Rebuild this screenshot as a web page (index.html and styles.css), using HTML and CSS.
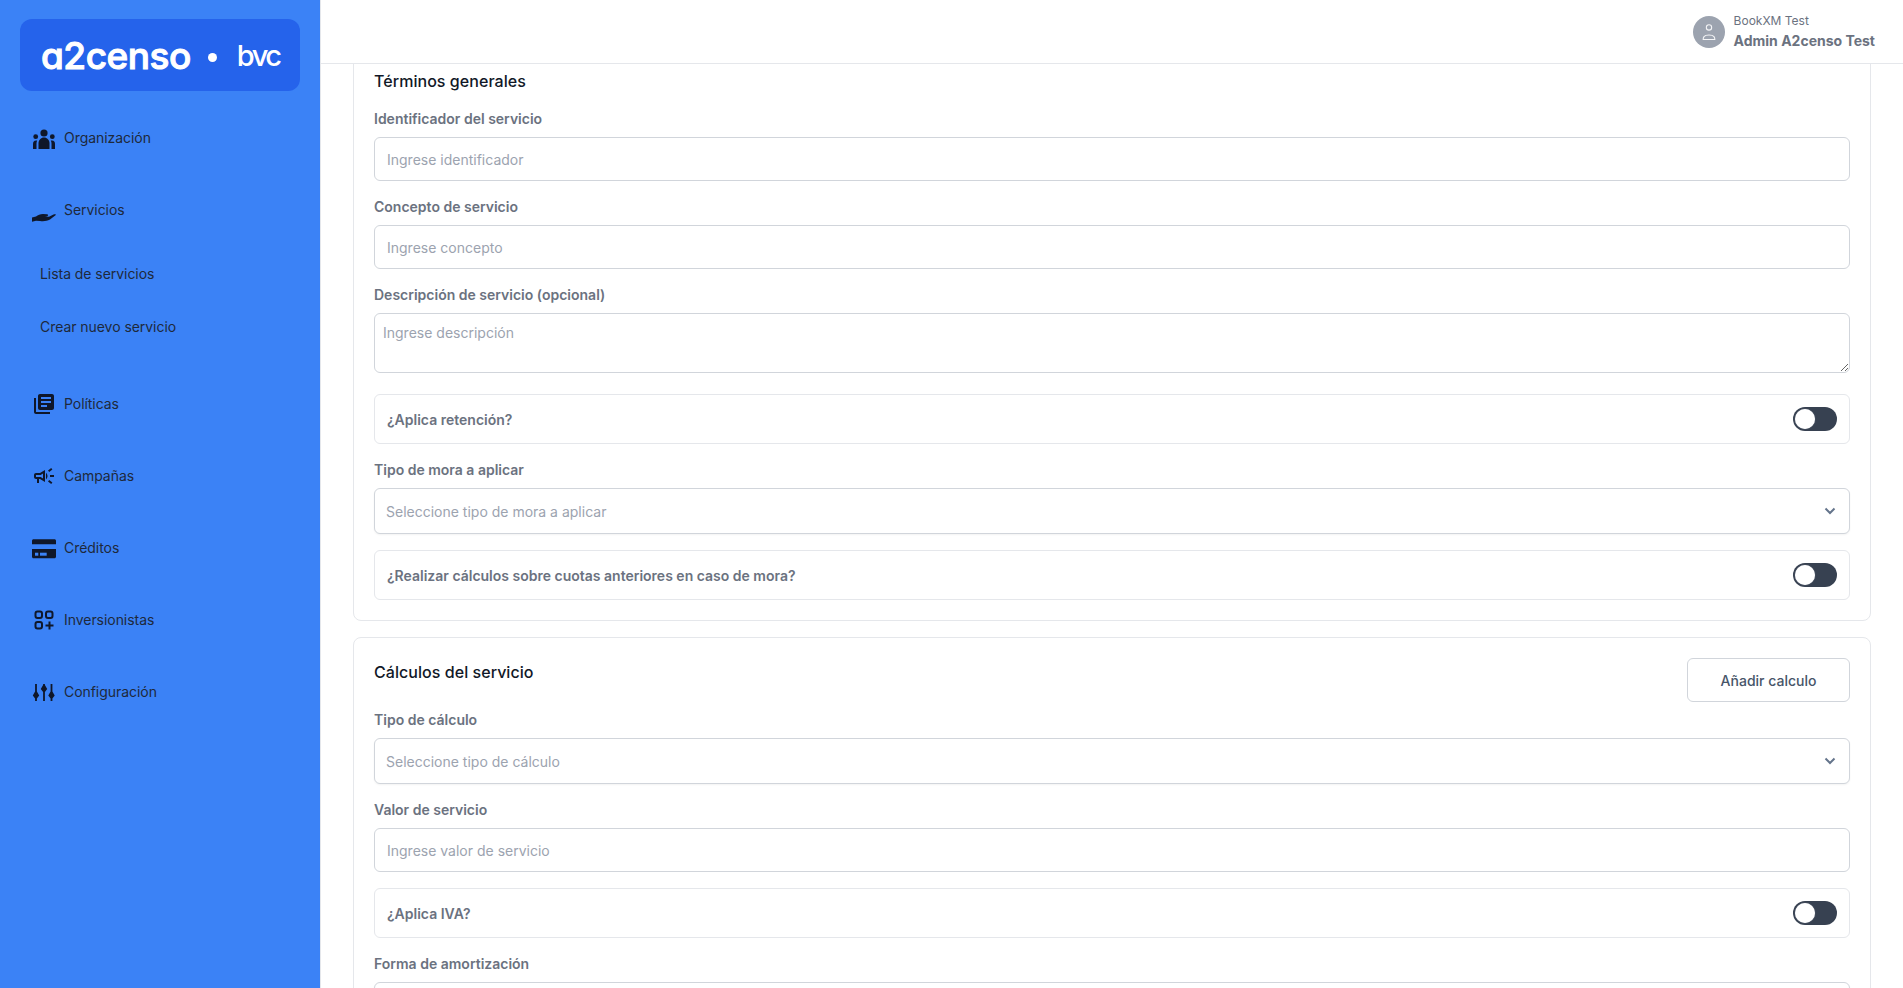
FILE: index.html
```html
<!DOCTYPE html>
<html lang="es">
<head>
    <meta charset="UTF-8">
    <title>Crear servicio</title>
    <link rel="stylesheet" href="styles.css">
</head>
<body>
<div class="layout">
    <aside class="sidebar">
        <div class="logo">
            <span class="logo-main">a2censo</span>
            <span class="logo-dot"></span>
            <span class="logo-bvc">bvc</span>
        </div>
        <nav class="nav">
            <a class="nav-item">
                <svg class="nav-icon" viewBox="0 0 24 24"><circle cx="12" cy="7" r="3.600"/><circle cx="3.700" cy="10.700" r="2.400"/><circle cx="20.300" cy="10.700" r="2.400"/><path d="M6.500 23v-6c0-3 2.500-5.500 5.500-5.500s5.500 2.500 5.500 5.500v6z"/><path d="M1 23v-5c0-2 1-3.500 3-3.500h1.200c-.5 1-.7 2-.7 3V23z"/><path d="M23 23v-5c0-2-1-3.500-3-3.500h-1.200c.5 1 .7 2 .7 3V23z"/></svg>
                <span>Organización</span>
            </a>
            <a class="nav-item">
                <svg class="nav-icon" viewBox="0 0 24 24"><path d="M0 19.500L4 18.500C6 17 8 16 11 16L15 16.300C16.500 16.500 16.500 18 15 18.200L13 18.500L17 18.800L21.500 16.500C23 16 24.500 16.300 23.500 17.200L18 21.500C15 23 12 23.500 8 23L4 22.800L0 23.800Z"/></svg>
                <span>Servicios</span>
            </a>
            <div class="subnav">
                <a class="sub-item">Lista de servicios</a>
                <a class="sub-item">Crear nuevo servicio</a>
            </div>
            <a class="nav-item">
                <svg class="nav-icon" viewBox="0 0 24 24"><path d="M4 6H2v14c0 1.100.9 2 2 2h14v-2H4V6zm16-4H8c-1.100 0-2 .9-2 2v12c0 1.100.9 2 2 2h12c1.100 0 2-.9 2-2V4c0-1.100-.9-2-2-2zm-1 9H9V9h10v2zm-4 4H9v-2h6v2zm4-8H9V5h10v2z"/></svg>
                <span>Políticas</span>
            </a>
            <a class="nav-item">
                <svg class="nav-icon" viewBox="0 0 24 24"><path d="M18 11v2h4v-2h-4zm-2 6.610c.96.71 2.210 1.650 3.200 2.390.4-.53.8-1.070 1.200-1.600-.99-.74-2.240-1.680-3.200-2.400-.4.54-.8 1.080-1.200 1.610zM20.400 5.600c-.4-.53-.8-1.070-1.200-1.600-.99.74-2.240 1.680-3.200 2.400.4.53.8 1.070 1.200 1.600.96-.72 2.210-1.650 3.200-2.400zM4 9c-1.100 0-2 .9-2 2v2c0 1.100.9 2 2 2h1v4h2v-4h1l5 3V6L8 9H4zm5.030 1.710L11 9.530v4.940l-1.970-1.180-.48-.29H4v-2h4.550l.48-.29zM15.500 12c0-1.330-.58-2.530-1.500-3.350v6.690c.92-.81 1.500-2.010 1.500-3.340z"/></svg>
                <span>Campañas</span>
            </a>
            <a class="nav-item">
                <svg class="nav-icon" viewBox="0 0 24 24"><path d="M1.500 3.300h21c.8 0 1.500.7 1.500 1.500v3.500H0V4.800c0-.8.7-1.500 1.500-1.500zM0 13h24v7.800c0 .8-.7 1.500-1.500 1.500h-21C.7 22.300 0 21.600 0 20.800V13z"/><rect x="3" y="16.700" width="3.300" height="3" fill="#3b82f6"/><rect x="8" y="16.700" width="6.700" height="3" fill="#3b82f6"/></svg>
                <span>Créditos</span>
            </a>
            <a class="nav-item">
                <svg class="nav-icon nav-icon-line" viewBox="0 0 24 24"><rect x="3.500" y="3.500" width="6.500" height="6.500" rx="2"/><rect x="14" y="3.500" width="6.500" height="6.500" rx="2"/><rect x="3.500" y="14" width="6.500" height="6.500" rx="2"/><path d="M13.500 17.500h8M17.500 13.500v8"/></svg>
                <span>Inversionistas</span>
            </a>
            <a class="nav-item">
                <svg class="nav-icon" viewBox="0 0 24 24"><path d="M3.100 4h1.800v7.500l2.300 4-2.300 3V21H3.100v-2.500l-2.300-3 2.300-4V4zM11.100 4h1.800v1l2.300 4-2.300 3v9h-1.800v-9L8.800 9l2.300-4V4zM18.600 4h1.800v7.500l2.300 4-2.300 3V21h-1.800v-2.500l-2.300-3 2.300-4V4z"/></svg>
                <span>Configuración</span>
            </a>
        </nav>
    </aside>

    <div class="main">
        <header class="topbar">
            <div class="avatar">
                <svg viewBox="0 0 24 24" class="avatar-icon"><circle cx="12" cy="6.500" r="3.200"/><path d="M5 21c0-1 0-2 1-3.500 1-1.300 3.500-2 6-2s5 .7 6 2c1 1.500 1 2.500 1 3.500z"/></svg>
            </div>
            <div class="user">
                <span class="user-org">BookXM Test</span>
                <span class="user-name">Admin A2censo Test</span>
            </div>
        </header>

        <div class="content">
            <div class="scroller">
                <section class="card">
                    <h2 class="card-title">Términos generales</h2>
                    <div class="field">
                        <label class="label">Identificador del servicio</label>
                        <input class="input" type="text" placeholder="Ingrese identificador">
                    </div>
                    <div class="field">
                        <label class="label">Concepto de servicio</label>
                        <input class="input" type="text" placeholder="Ingrese concepto">
                    </div>
                    <div class="field">
                        <label class="label">Descripción de servicio (opcional)</label>
                        <textarea class="textarea" placeholder="Ingrese descripción"></textarea>
                    </div>
                    <div class="toggle-row">
                        <span>¿Aplica retención?</span>
                        <span class="toggle"></span>
                    </div>
                    <div class="field">
                        <label class="label">Tipo de mora a aplicar</label>
                        <div class="select">
                            <span>Seleccione tipo de mora a aplicar</span>
                            <svg class="chevron" viewBox="0 0 12 8"><path d="M1.500 1.500L6 6l4.500-4.500"/></svg>
                        </div>
                    </div>
                    <div class="toggle-row">
                        <span>¿Realizar cálculos sobre cuotas anteriores en caso de mora?</span>
                        <span class="toggle"></span>
                    </div>
                </section>

                <section class="card">
                    <div class="card-head">
                        <h2 class="card-title card-title-offset">Cálculos del servicio</h2>
                        <button class="btn">Añadir calculo</button>
                    </div>
                    <div class="field">
                        <label class="label">Tipo de cálculo</label>
                        <div class="select">
                            <span>Seleccione tipo de cálculo</span>
                            <svg class="chevron" viewBox="0 0 12 8"><path d="M1.500 1.500L6 6l4.500-4.500"/></svg>
                        </div>
                    </div>
                    <div class="field">
                        <label class="label">Valor de servicio</label>
                        <input class="input" type="text" placeholder="Ingrese valor de servicio">
                    </div>
                    <div class="toggle-row">
                        <span>¿Aplica IVA?</span>
                        <span class="toggle"></span>
                    </div>
                    <div class="field">
                        <label class="label">Forma de amortización</label>
                        <div class="select"></div>
                    </div>
                </section>
            </div>
        </div>
    </div>
</div>
</body>
</html>
```

FILE: styles.css
```css
* {
    box-sizing: border-box;
    font-family: 'Inter', 'Liberation Sans', sans-serif;
}

html, body {
    margin: 0;
    height: 100%;
    overflow: hidden;
}

.layout {
    display: flex;
    height: 100vh;
}

/* sidebar */
.sidebar {
    width: 321px;
    flex-shrink: 0;
    background-color: #3b82f6;
    border-right: 1px solid #e5e7eb;
    padding: 19px 20px 0;
}

.logo {
    display: flex;
    align-items: center;
    height: 72px;
    padding-left: 21px;
    border-radius: 12px;
    background-color: #2563eb;
    color: #fff;
    font-feature-settings: "cv11";
}

.logo-main {
    font-size: 37px;
    font-weight: 500;
    letter-spacing: -0.5px;
    line-height: 1;
    -webkit-text-stroke: 1px #fff;
}

.logo-dot {
    width: 9px;
    height: 9px;
    margin: 4px 20px 0 17px;
    border-radius: 50%;
    background-color: #fff;
}

.logo-bvc {
    font-size: 29px;
    font-weight: 500;
    letter-spacing: -2.5px;
    line-height: 1;
}

.nav {
    display: flex;
    flex-direction: column;
    padding-top: 11px;
}

.nav-item {
    display: flex;
    align-items: center;
    gap: 8px;
    height: 72px;
    padding-left: 12px;
    font-size: 14px;
    letter-spacing: -0.05px;
    color: #1e293b;
}

.nav-item span {
    margin-bottom: 2px;
}

.nav-icon {
    width: 24px;
    height: 24px;
    flex-shrink: 0;
    fill: #0f172a;
}

.nav-icon-line {
    fill: none;
    stroke: #0f172a;
    stroke-width: 2;
}

.subnav {
    display: flex;
    flex-direction: column;
    padding: 1px 0 15px;
}

.sub-item {
    display: flex;
    align-items: center;
    height: 53px;
    padding-left: 20px;
    font-size: 14px;
    letter-spacing: -0.05px;
    color: #1e293b;
}

/* main area */
.main {
    flex: 1;
    min-width: 0;
    display: flex;
    flex-direction: column;
}

.topbar {
    display: flex;
    align-items: center;
    justify-content: flex-end;
    gap: 9px;
    height: 64px;
    flex-shrink: 0;
    padding-right: 28px;
    border-bottom: 1px solid #e5e7eb;
    background-color: #fff;
}

.avatar {
    display: flex;
    align-items: center;
    justify-content: center;
    width: 32px;
    height: 32px;
    border-radius: 50%;
    background-color: #9ca3af;
}

.avatar-icon {
    width: 20px;
    height: 20px;
    fill: none;
    stroke: #f3f4f6;
    stroke-width: 1.300;
}

.user {
    display: flex;
    flex-direction: column;
    gap: 2px;
}

.user-org {
    font-size: 12px;
    line-height: 16px;
    color: #6b7280;
}

.user-name {
    font-size: 14px;
    font-weight: 700;
    line-height: 20px;
    color: #6b7280;
}

.content {
    flex: 1;
    overflow: hidden;
    padding: 0 32px;
}

/* scrolled down a bit, top of first card is hidden */
.scroller {
    display: flex;
    flex-direction: column;
    gap: 16px;
    margin-top: -16px;
}

.card {
    display: flex;
    flex-direction: column;
    gap: 16px;
    padding: 20px 20px 20px;
    border: 1px solid #e5e7eb;
    border-radius: 8px;
    background-color: #fff;
}

.card-head {
    display: flex;
    align-items: flex-start;
    justify-content: space-between;
    margin-bottom: -8px;
}

.card-title {
    margin: 0;
    font-size: 16px;
    font-weight: 500;
    line-height: 24px;
    letter-spacing: 0.05px;
    color: #111827;
}

.card-title-offset {
    margin-top: 2px;
}

.field {
    display: flex;
    flex-direction: column;
    gap: 8px;
}

.label {
    font-size: 14px;
    font-weight: 600;
    line-height: 20px;
    color: #6b7280;
}

.input {
    width: 100%;
    height: 44px;
    padding: 0 12px;
    font-size: 14px;
    color: #374151;
    border: 1px solid #d1d5db;
    border-radius: 6px;
    background-color: #fff;
    outline: none;
}

.input::placeholder,
.textarea::placeholder {
    color: #9ca3af;
    opacity: 1;
}

.textarea {
    display: block;
    width: 100%;
    height: 60px;
    margin-bottom: 5px;
    padding: 9px 8px;
    font-size: 14px;
    line-height: 20px;
    border: 1px solid #d1d5db;
    border-radius: 6px;
    outline: none;
}

.select {
    display: flex;
    align-items: center;
    justify-content: space-between;
    height: 46px;
    padding: 0 13px 0 11px;
    font-size: 14px;
    color: #9ca3af;
    border: 1px solid #d1d5db;
    border-radius: 6px;
    background-color: #fff;
    box-shadow: 0 1px 2px rgba(0, 0, 0, 0.05);
}

.chevron {
    width: 12px;
    height: 8px;
    fill: none;
    stroke: #64748b;
    stroke-width: 2;
}

.toggle-row {
    display: flex;
    align-items: center;
    justify-content: space-between;
    height: 50px;
    padding: 0 12px;
    font-size: 14px;
    font-weight: 600;
    color: #6b7280;
    border: 1px solid #e5e7eb;
    border-radius: 6px;
}

.toggle {
    position: relative;
    width: 44px;
    height: 24px;
    border-radius: 12px;
    background-color: #374151;
}

.toggle::before {
    content: "";
    position: absolute;
    top: 2px;
    left: 2px;
    width: 20px;
    height: 20px;
    border-radius: 50%;
    background-color: #fff;
    box-shadow: 0 0 1px #9ca3af;
}

.btn {
    width: 163px;
    height: 44px;
    font-size: 14px;
    font-weight: 500;
    color: #475569;
    border: 1px solid #d1d5db;
    border-radius: 6px;
    background-color: #fff;
}
```
